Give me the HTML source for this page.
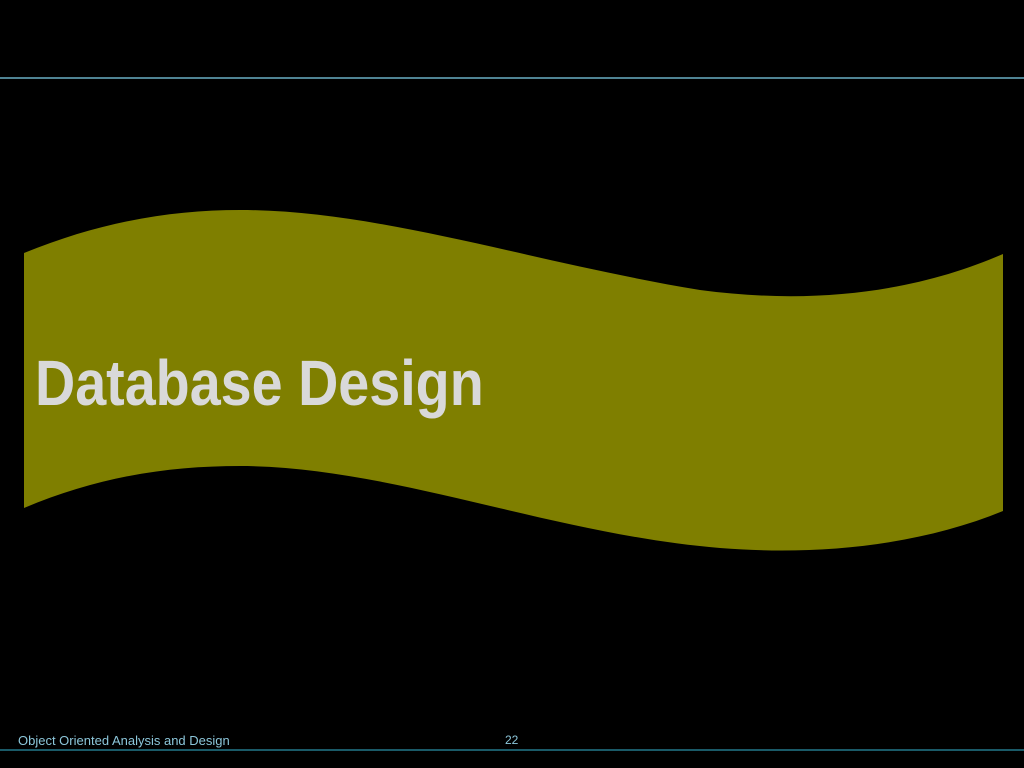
<!DOCTYPE html>
<html><head><meta charset="utf-8"><style>
html,body{margin:0;padding:0;background:#000;width:1024px;height:768px;overflow:hidden;position:relative;font-family:"Liberation Sans",sans-serif}
.l1{position:absolute;left:0;top:77px;width:1024px;height:2px;background:#4f8393}
.l2{position:absolute;left:0;top:749px;width:1024px;height:2px;background:#1a5a68}
.ft{position:absolute;left:18px;top:733px;font-size:13px;color:#8cc6da}
.pn{position:absolute;left:505px;top:733px;font-size:12px;color:#8cc6da}
.t{position:absolute;left:35px;top:351px;font-weight:bold;font-size:64px;color:#d9d9d9;white-space:nowrap;line-height:1;transform:scaleX(0.87);transform-origin:0 0}
</style></head><body>
<div class="l1"></div>
<svg width="1024" height="768" style="position:absolute;left:0;top:0">
<path d="M24,253 C100,222 170,210 240,210 C380,210 530,262 700,290 C820,306 920,290 1003,254 L1003,511 C920,545 820,556 720,548 C550,534 390,466 240,466 C170,466 100,476 24,508 Z" fill="#7f7f00"/>
</svg>
<div class="t">Database Design</div>
<div class="ft">Object Oriented Analysis and Design</div>
<div class="pn">22</div>
<div class="l2"></div>
</body></html>
